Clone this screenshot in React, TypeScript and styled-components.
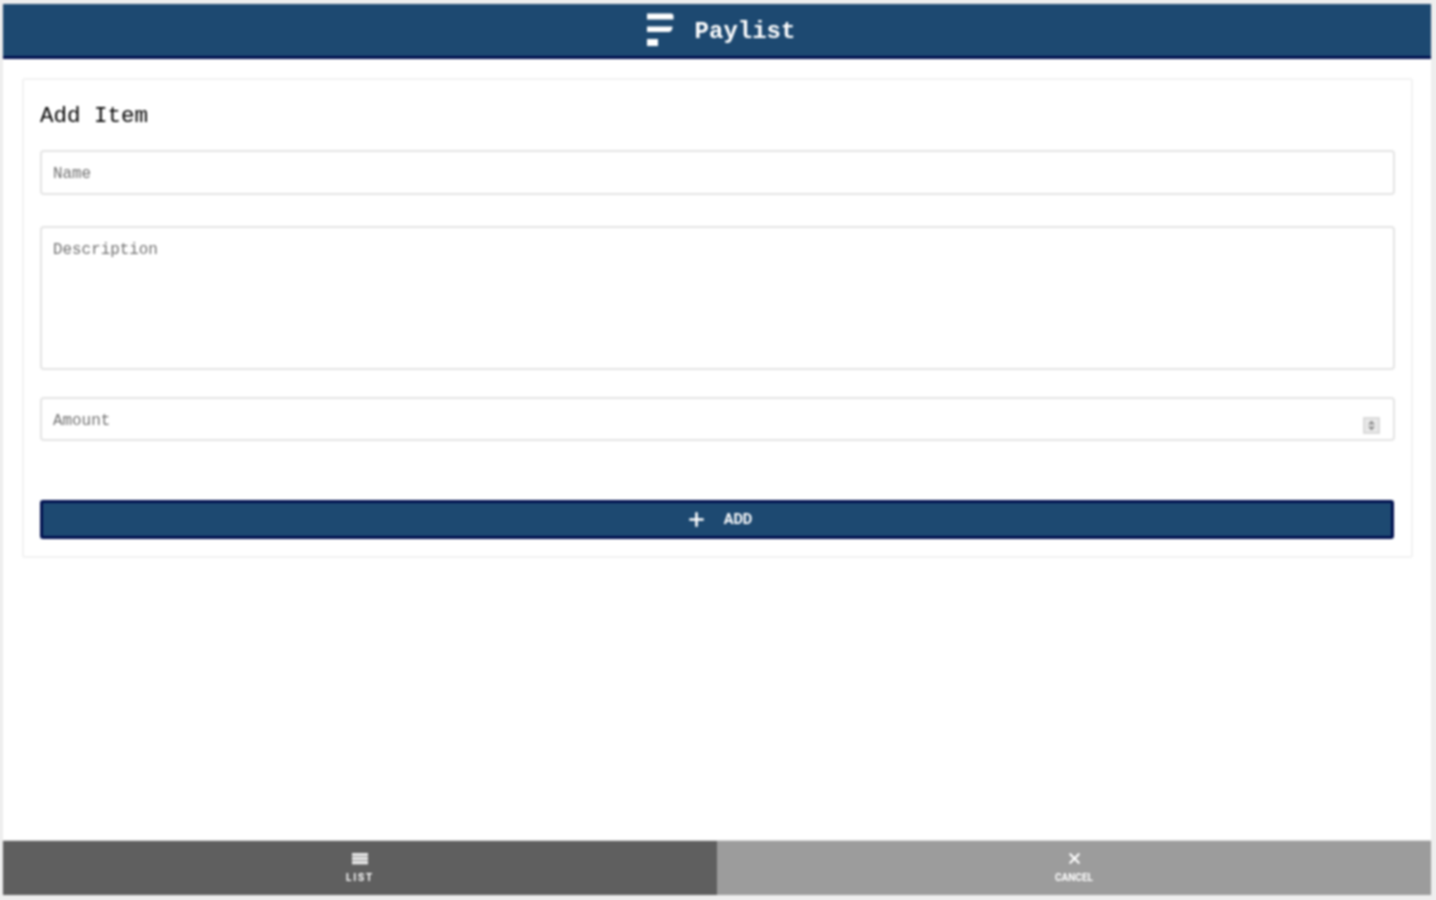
import styled, { createGlobalStyle } from "styled-components";
import { Plus, X } from "lucide-react";

const GlobalStyle = createGlobalStyle`
	* {
		box-sizing: border-box;
	}

	html, body {
		margin: 0;
		height: 900px;
		overflow: hidden;
		background: #eeeeee;
		font-family: "Liberation Mono", "DejaVu Sans Mono", monospace;
	}
`;

const Page = styled.div`
	width: 1428px;
	height: 891px;
	margin: 4px 5px 5px 3px;
	background: #ffffff;
	display: flex;
	flex-direction: column;
	filter: blur(0.8px);
`;

const Header = styled.header`
	height: 55px;
	flex: none;
	background: #1d4971;
	border-bottom: 3px solid #00104f;
	display: flex;
	align-items: center;
	justify-content: center;
	gap: 20px;
	padding-left: 6px;
	color: #ffffff;
`;

const Brand = styled.h1`
	margin: 3px 0 0;
	font-size: 24px;
	font-weight: 700;
	line-height: 1;
`;

const Main = styled.main`
	flex: 1;
	padding: 19px 18px 0 19px;
`;

const Card = styled.section`
	height: 480px;
	border: 2px solid #f2f2f2;
	border-radius: 3px;
	padding: 0 16px;
	display: flex;
	flex-direction: column;
`;

const Title = styled.h2`
	margin: 23px 0 21px;
	font-size: 22.5px;
	line-height: 26px;
	font-weight: 400;
	color: #000000;
`;

const fieldStyles = `
	display: block;
	width: 100%;
	border: 2px solid #e4e4e4;
	border-radius: 4px;
	background: #ffffff;
	padding: 0 11px;
	font-family: "Liberation Mono", "DejaVu Sans Mono", monospace;
	font-size: 15.9px;
	color: #555555;
	outline: none;

	&::placeholder {
		color: #707070;
		opacity: 1;
	}
`;

const TextInput = styled.input`
	${fieldStyles}
	height: 45px;
	padding-top: 2px;
`;

const TextArea = styled.textarea`
	${fieldStyles}
	height: 144px;
	margin-top: 31px;
	padding-top: 13px;
	resize: none;
	line-height: 18px;
`;

const AmountField = styled.div`
	position: relative;
	margin-top: 27px;
`;

const AmountInput = styled(TextInput)`
	height: 44px;
	padding-top: 4px;
`;

const Spinner = styled.svg`
	position: absolute;
	top: 20px;
	right: 15px;
`;

const AddButton = styled.button`
	height: 39px;
	margin-top: 59px;
	margin-right: 1px;
	flex: none;
	border: 3px solid #00104f;
	border-radius: 3px;
	background: #1d4971;
	color: #ffffff;
	display: flex;
	align-items: center;
	justify-content: center;
	gap: 17px;
	padding: 0 0 0 4px;
	font-family: Roboto, "Liberation Sans", sans-serif;
	font-size: 14.5px;
	font-weight: 700;
`;

const Footer = styled.footer`
	height: 55px;
	flex: none;
	display: grid;
	grid-template-columns: 1fr 1fr;
	border-top: 1px solid #d9d9d9;
`;

const FooterButton = styled.button<{ $active?: boolean }>`
	border: none;
	padding: 9px 0 0;
	background: ${(p) => (p.$active ? "#5f5f5f" : "#9c9c9c")};
	color: #ffffff;
	display: flex;
	flex-direction: column;
	align-items: center;
	gap: 5px;
	font-family: Roboto, "Liberation Sans", sans-serif;
	font-size: 10px;
	font-weight: 700;
	line-height: 12px;
	letter-spacing: ${(p) => (p.$active ? "1.8px" : "0")};
`;

const ListGlyph = styled.span`
	display: block;
	width: 16px;
	height: 12px;
	margin: 3px 0 2px;
	background: repeating-linear-gradient(to bottom, #e8e8e8 0 3px, #8f8f8f 3px 4px);
`;

const LogoIcon = () => (
	<svg width="30" height="36" viewBox="0 0 30 36" fill="#ffffff" aria-hidden="true">
		<path d="M2 1.5h24c1.6 0 2.5 1 2.5 2.5v3.5H2z" />
		<path d="M2 14.5h25.5c0 3-1.4 5.5-4 5.5H2z" />
		<rect x="2" y="27" width="11" height="7" />
	</svg>
);

const App = () => {
	return (
		<>
			<GlobalStyle />
			<Page>
				<Header>
					<LogoIcon />
					<Brand>Paylist</Brand>
				</Header>
				<Main>
					<Card>
						<Title>Add Item</Title>
						<TextInput placeholder="Name" />
						<TextArea placeholder="Description" />
						<AmountField>
							<AmountInput placeholder="Amount" />
							<Spinner width="17" height="17" viewBox="0 0 17 17" aria-hidden="true">
								<rect width="17" height="17" fill="#e8e8e8" />
								<rect x="1" y="1" width="15" height="15" fill="none" stroke="#cccccc" />
								<path d="M8.5 3.5 5 7.5h7zM8.5 13.5l-3.5-4h7z" fill="#8c8c8c" />
							</Spinner>
						</AmountField>
						<AddButton>
							<Plus size={21} strokeWidth={3} />
							ADD
						</AddButton>
					</Card>
				</Main>
				<Footer>
					<FooterButton $active>
						<ListGlyph />
						LIST
					</FooterButton>
					<FooterButton>
						<X size={17} strokeWidth={3} />
						CANCEL
					</FooterButton>
				</Footer>
			</Page>
		</>
	);
};

export default App;
